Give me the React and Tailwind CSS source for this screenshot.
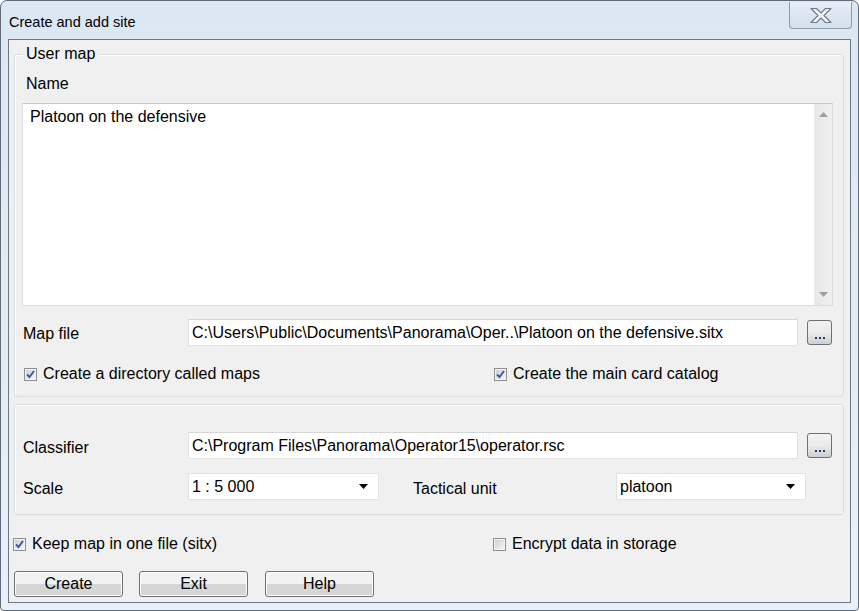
import React from "react";

const font = { fontFamily: '"Liberation Sans", Arial, sans-serif' };

function Checkbox({ checked }) {
  return (
    <div className="w-[13px] h-[13px] border border-[#8e8f8f] bg-gradient-to-br from-[#dcdcdc] to-[#ffffff] flex items-center justify-center shrink-0">
      <div className="w-[11px] h-[11px] border border-[#f4f4f4] bg-gradient-to-br from-[#cbcfd5] to-[#f6f6f6] flex items-center justify-center">
        {checked && (
          <svg width="9" height="9" viewBox="0 0 9 9">
            <path d="M1 4.5 L3.5 7 L8 1" fill="none" stroke="#3d58a0" strokeWidth="2" />
          </svg>
        )}
      </div>
    </div>
  );
}

function DotsButton() {
  return (
    <div className="w-[25px] h-[25px] rounded-[3px] border border-[#707070] bg-gradient-to-b from-[#f2f2f2] via-[#ebebeb] to-[#cfcfcf] flex items-end justify-center pb-[5px] shrink-0">
      <div className="flex gap-[2px]">
        <div className="w-[2px] h-[2px] bg-[#1a3c7a]" />
        <div className="w-[2px] h-[2px] bg-[#1a3c7a]" />
        <div className="w-[2px] h-[2px] bg-[#1a3c7a]" />
      </div>
    </div>
  );
}

function Input({ value, width }) {
  return (
    <div
      className="h-[27px] bg-white border border-[#e3e3e3] border-t-[#d6d6d6] flex items-center pl-[3px] text-[16px] text-black"
      style={{ width }}
    >
      {value}
    </div>
  );
}

function Select({ value, width }) {
  return (
    <div
      className="h-[27px] bg-white border border-[#e3e3e3] flex items-center justify-between pl-[3px] pr-[10px] text-[16px] text-black"
      style={{ width }}
    >
      <span>{value}</span>
      <svg width="9" height="5" viewBox="0 0 9 5">
        <path d="M0 0 H9 L4.5 5 Z" fill="#000" />
      </svg>
    </div>
  );
}

function Button({ children }) {
  return (
    <div className="w-[109px] h-[26px] rounded-[3px] border border-[#707070] bg-gradient-to-b from-[#f2f2f2] from-50% to-[#d6d6d6] to-50% flex items-center justify-center text-[16px] text-black shadow-[inset_0_0_0_1px_#fcfcfc]">
      {children}
    </div>
  );
}

export default function App() {
  return (
    <div style={font} className="w-[859px] h-[611px] bg-white">
      <div className="w-[859px] h-[611px] rounded-t-[7px] rounded-b-[4px] border border-[#5f6b78] bg-gradient-to-b from-[#dce7f4] to-[#e9f0f8] flex flex-col">
        {/* title bar */}
        <div className="h-[38px] flex items-start justify-between shrink-0">
          <div className="pl-[8px] pt-[11px] text-[14.5px] text-black leading-[20px]">Create and add site</div>
          <div className="mr-[6px] w-[63px] h-[27px] border border-t-0 border-[#8c9aab] rounded-b-[4px] bg-gradient-to-b from-[#e6eef8] to-[#d3dfee] flex items-center justify-center mt-[1px]">
            <svg width="24" height="17" viewBox="0 0 24 17">
              <path
                d="M2 1.5 H7.5 L12 6 L16.5 1.5 H22 L15 8.5 L22 15.5 H16.5 L12 11 L7.5 15.5 H2 L9 8.5 Z"
                fill="#f4f6f9"
                stroke="#6c7889"
                strokeWidth="1.1"
                strokeLinejoin="round"
              />
            </svg>
          </div>
        </div>
        {/* client */}
        <div className="mx-[7px] mb-[7px] flex-1 border border-[#6c7888] bg-[#f0f0f0] flex flex-col">
          {/* group 1 */}
          <div className="relative ml-[5px] mt-[14px] w-[830px] h-[343px] border border-[#d5dfe5] rounded-[3px] shadow-[inset_1px_1px_0_#ffffff] flex flex-col">
            <div className="absolute -top-[10px] left-[7px] px-[4px] bg-[#f0f0f0] text-[16px] leading-[18px] text-black">User map</div>
            <div className="ml-[11px] mt-[19px] h-[20px] leading-[20px] text-[16px] text-black">Name</div>
            <div className="ml-[7px] mt-[9px] w-[811px] h-[203px] bg-white border border-[#dcdcdc] border-t-[#c8c8c8] flex">
              <div className="flex-1 pl-[7px] pt-[3px] text-[16px] leading-[20px] text-black">Platoon on the defensive</div>
              <div className="w-[18px] h-full bg-gradient-to-r from-[#e8e8e8] to-[#f0f0f0] border-l border-[#e8e8e8] flex flex-col justify-between items-center py-[8px]">
                <svg width="9" height="5" viewBox="0 0 9 5"><path d="M0 5 H9 L4.5 0 Z" fill="#a0a0a0" /></svg>
                <svg width="9" height="5" viewBox="0 0 9 5"><path d="M0 0 H9 L4.5 5 Z" fill="#a0a0a0" /></svg>
              </div>
            </div>
            <div className="mt-[13px] h-[27px] flex items-center">
              <div className="ml-[8px] w-[165px] text-[16px] text-black pt-[2px]">Map file</div>
              <Input width={610} value={"C:\\Users\\Public\\Documents\\Panorama\\Oper..\\Platoon on the defensive.sitx"} />
              <div className="ml-[9px]"><DotsButton /></div>
            </div>
            <div className="mt-[18px] h-[20px] flex items-center">
              <div className="ml-[9px] w-[470px] flex items-center gap-[6px]">
                <Checkbox checked />
                <span className="text-[16px] text-black">Create a directory called maps</span>
              </div>
              <div className="flex items-center gap-[6px]">
                <Checkbox checked />
                <span className="text-[16px] text-black">Create the main card catalog</span>
              </div>
            </div>
          </div>
          {/* group 2 */}
          <div className="ml-[5px] mt-[7px] w-[830px] h-[111px] border border-[#d5dfe5] rounded-[3px] shadow-[inset_1px_1px_0_#ffffff] flex flex-col">
            <div className="mt-[27px] h-[27px] flex items-center">
              <div className="ml-[8px] w-[165px] text-[16px] text-black pt-[5px]">Classifier</div>
              <Input width={610} value={"C:\\Program Files\\Panorama\\Operator15\\operator.rsc"} />
              <div className="ml-[9px]"><DotsButton /></div>
            </div>
            <div className="mt-[14px] h-[27px] flex items-center">
              <div className="ml-[8px] w-[165px] text-[16px] text-black pt-[4px]">Scale</div>
              <Select width={191} value="1 : 5 000" />
              <div className="ml-[34px] w-[203px] text-[16px] text-black pt-[4px]">Tactical unit</div>
              <Select width={190} value="platoon" />
            </div>
          </div>
          {/* bottom */}
          <div className="mt-[19px] h-[20px] flex items-center">
            <div className="ml-[4px] w-[480px] flex items-center gap-[6px]">
              <Checkbox checked />
              <span className="text-[16px] text-black">Keep map in one file (sitx)</span>
            </div>
            <div className="flex items-center gap-[6px]">
              <Checkbox />
              <span className="text-[16px] text-black">Encrypt data in storage</span>
            </div>
          </div>
          <div className="mt-[17px] ml-[5px] flex gap-[16px]">
            <Button>Create</Button>
            <Button>Exit</Button>
            <div className="ml-[1px]"><Button>Help</Button></div>
          </div>
        </div>
      </div>
    </div>
  );
}
